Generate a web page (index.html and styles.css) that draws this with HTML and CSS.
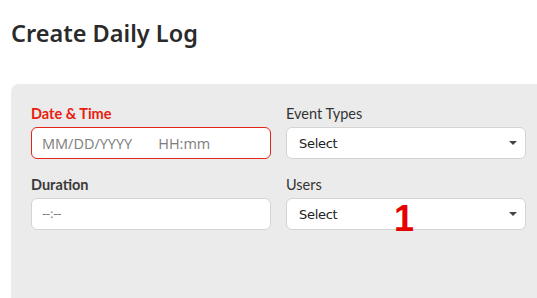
FILE: index.html
```html
<!DOCTYPE html>
<html>
<head>
<meta charset="utf-8">
<link rel="stylesheet" href="styles.css">
</head>
<body>
<h1 class="title">Create Daily Log</h1>
<div class="panel">
  <div class="grid">
    <div class="field">
      <label class="label label-error">Date &amp; Time</label>
      <div class="input input-error">
        <span class="ph">MM/DD/YYYY</span><span class="ph ph-time">HH:mm</span>
      </div>
    </div>
    <div class="field">
      <label class="label">Event Types</label>
      <div class="input select"><span class="sel-text">Select</span><span class="caret"></span></div>
    </div>
    <div class="field">
      <label class="label label-strong">Duration</label>
      <div class="input"><span class="dur">--:--</span></div>
    </div>
    <div class="field">
      <label class="label">Users</label>
      <div class="input select"><span class="sel-text">Select</span><span class="caret"></span></div>
    </div>
  </div>
  <span class="marker">1</span>
</div>
</body>
</html>
```
FILE: styles.css
```css
html, body { margin: 0; padding: 0; background: #ffffff; }
body { font-family: Lato, "Open Sans", sans-serif; color: #333333; width: 537px; height: 298px; overflow: hidden; }
.title {
  margin: 0;
  padding: 17px 0 0 11px;
  font-family: "Noto Sans", Lato, sans-serif;
  font-weight: 600;
  font-size: 23.5px;
  line-height: 32px;
  color: #2a2a2a;
}
.panel {
  position: relative;
  margin: 35px 0 0 11px;
  background: #ebebeb;
  border-radius: 8px 0 0 0;
  height: 194px;
  padding: 20px 12px 0 20px;
}
.grid {
  display: grid;
  grid-template-columns: 240px 240px;
  column-gap: 15px;
  row-gap: 16px;
}
.field { display: flex; flex-direction: column; }
.label {
  font-size: 14.5px;
  line-height: 17px;
  color: #333333;
  margin-bottom: 5px;
  margin-top: 1px;
}
.label-error { color: #e8200f; font-weight: 700; }
.label-strong { font-weight: 700; color: #3a3a3a; }
.input {
  box-sizing: border-box;
  height: 32px;
  background: #ffffff;
  border: 1px solid #d4d4d4;
  border-radius: 6px;
  display: flex;
  align-items: center;
  padding: 0 10px;
}
.input-error { border-color: #e3261a; }
.ph { font-family: "Open Sans", sans-serif; font-size: 14.5px; color: #7d7d7d; }
.ph-time { margin-left: 26px; }
.dur { font-family: "DejaVu Sans", sans-serif; font-size: 12px; color: #777; letter-spacing: -0.5px; }
.select { padding: 0 0 0 12px; justify-content: space-between; }
.sel-text { font-family: "DejaVu Sans", sans-serif; font-size: 13px; color: #222; letter-spacing: -0.3px; }
.caret {
  width: 0; height: 0;
  border-left: 4px solid transparent;
  border-right: 4px solid transparent;
  border-top: 4px solid #444;
  margin-right: 8px;
}
.marker {
  position: absolute;
  left: 383px;
  top: 117px;
  font-family: "Liberation Sans", Arial, sans-serif;
  font-weight: 700;
  font-size: 36px;
  line-height: 36px;
  color: #e60000;
}
```
